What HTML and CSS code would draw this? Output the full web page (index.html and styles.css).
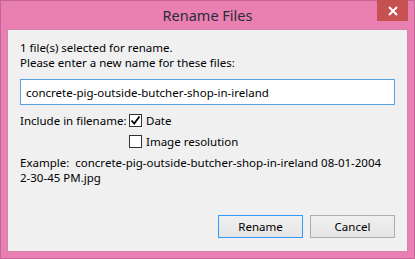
FILE: index.html
```html
<!DOCTYPE html>
<html lang="en">
<head>
  <meta charset="UTF-8">
  <title>Rename Files</title>
  <link rel="stylesheet" href="styles.css">
</head>
<body>
  <div class="window">
    <div class="titlebar">
      <span class="spacer"></span>
      <span class="title">Rename Files</span>
      <button class="close-btn" aria-label="Close">
        <svg width="10" height="10" viewBox="0 0 10 10">
          <path d="M1 1 L9 9 M9 1 L1 9" stroke="#fff" stroke-width="2" />
        </svg>
      </button>
    </div>

    <div class="client">
      <p class="info">1 file(s) selected for rename.<br>Please enter a new name for these files:</p>

      <input type="text" class="name-input" value="concrete-pig-outside-butcher-shop-in-ireland">

      <div class="include">
        <span class="include-label">Include in filename:</span>
        <div class="options">
          <label class="option">
            <span class="checkbox">
              <svg width="11" height="11" viewBox="0 0 11 11">
                <path d="M1.5 5.5 L4.2 8.5 L9.5 1.5" fill="none" stroke="#000" stroke-width="1.8" />
              </svg>
            </span>
            Date
          </label>
          <label class="option">
            <span class="checkbox"></span>
            Image resolution
          </label>
        </div>
      </div>

      <p class="example">Example:  concrete-pig-outside-butcher-shop-in-ireland 08-01-2004<br>2-30-45 PM.jpg</p>

      <div class="buttons">
        <button class="btn btn-default">Rename</button>
        <button class="btn">Cancel</button>
      </div>
    </div>
  </div>
</body>
</html>
```

FILE: styles.css
```css
body {
  margin: 0;
  font-family: 'Noto Sans', 'Open Sans', sans-serif;
  font-size: 11.5px;
  color: #000;
}

.window {
  width: 415px;
  height: 259px;
  box-sizing: border-box;
  border: 1px solid #c4649a;
  background-color: #e980b1;
  padding: 0 6px 6px 6px;
  display: flex;
  flex-direction: column;
}

.titlebar {
  height: 28px;
  display: grid;
  grid-template-columns: 31px 1fr 31px;
  align-items: start;
}

.title {
  text-align: center;
  font-size: 14.5px;
  line-height: 28px;
  color: #2b2b3a;
}

.close-btn {
  width: 31px;
  height: 21px;
  margin-top: -1px;
  padding: 0;
  border: none;
  background-color: #c75050;
  display: flex;
  align-items: center;
  justify-content: center;
}

.client {
  flex: 1;
  border: 1px solid #d582ad;
  background-color: #f0f0f0;
  padding: 10px 12px 0 12px;
  display: flex;
  flex-direction: column;
}

.info {
  margin: 0;
  line-height: 15px;
}

.name-input {
  margin-top: 9px;
  width: 375px;
  height: 26px;
  box-sizing: border-box;
  border: 1px solid #5a9ee6;
  background-color: #fff;
  padding: 0 5px;
  font-family: inherit;
  font-size: 11.5px;
  color: #000;
  outline: none;
}

.include {
  display: flex;
  margin-top: 8px;
  line-height: 15px;
}

.include-label {
  width: 109px;
  flex-shrink: 0;
  white-space: nowrap;
}

.options {
  display: flex;
  flex-direction: column;
  gap: 6px;
}

.option {
  display: flex;
  align-items: center;
  gap: 4px;
  height: 15px;
}

.checkbox {
  width: 13px;
  height: 13px;
  box-sizing: border-box;
  border: 1px solid #333;
  background-color: #fff;
  display: flex;
  align-items: center;
  justify-content: center;
}

.example {
  margin: 6px 0 0 0;
  line-height: 15px;
  white-space: pre;
}

.buttons {
  display: flex;
  justify-content: flex-end;
  gap: 7px;
  margin-top: auto;
  margin-bottom: 13px;
}

.btn {
  width: 85px;
  height: 23px;
  border: 1px solid #adadad;
  background: linear-gradient(#f0f0f0, #e5e5e5);
  font-family: inherit;
  font-size: 11.5px;
  color: #000;
  padding: 0;
}

.btn-default {
  border-color: #3399ff;
}
```
